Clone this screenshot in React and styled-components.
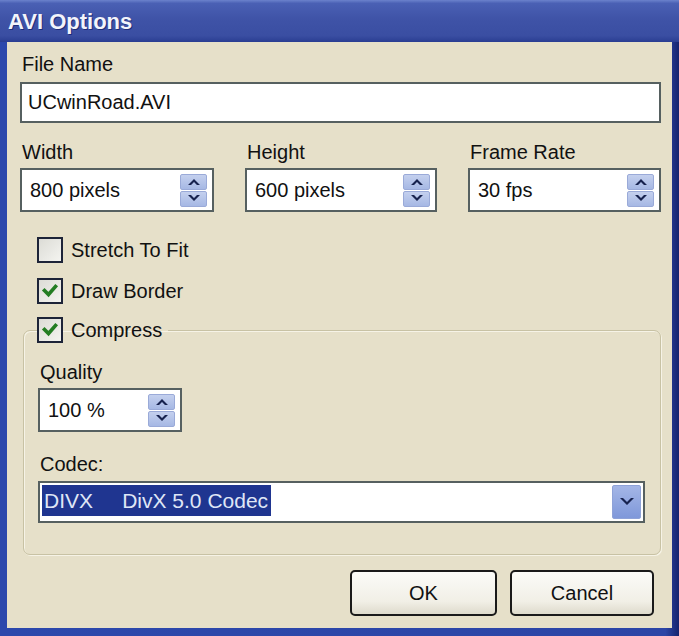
import React from "react";
import styled, { createGlobalStyle } from "styled-components";

const GlobalStyle = createGlobalStyle`
  html, body {
    margin: 0;
    padding: 0;
    background: #2a3f98;
  }
  body {
    font-family: "Liberation Sans", Arial, sans-serif;
  }
`;

function SpinArrows() {
  return (
    <SpinBtns>
      <SpinHalf>
        <svg width="14" height="9" viewBox="0 0 14 9">
          <path d="M1 8 L7 2 L13 8 L10 8 L7 5 L4 8 Z" fill="#17224e" />
        </svg>
      </SpinHalf>
      <SpinHalf>
        <svg width="14" height="9" viewBox="0 0 14 9">
          <path d="M1 1 L7 7 L13 1 L10 1 L7 4 L4 1 Z" fill="#17224e" />
        </svg>
      </SpinHalf>
    </SpinBtns>
  );
}

function Check({ checked, label }) {
  return (
    <CheckRow>
      <Box>
        {checked && (
          <svg width="18" height="18" viewBox="0 0 18 18">
            <path
              d="M3.5 8.5 L7.5 12.5 L14.5 4.5"
              fill="none"
              stroke="#237d23"
              strokeWidth="3.6"
              strokeLinecap="square"
            />
          </svg>
        )}
      </Box>
      <span>{label}</span>
    </CheckRow>
  );
}

export default function App() {
  return (
    <>
      <GlobalStyle />
      <Window>
        <TitleBar>AVI Options</TitleBar>
        <Client>
          <Label>File Name</Label>
          <TextBox>UCwinRoad.AVI</TextBox>

          <SpinGrid>
            <Field>
              <Label>Width</Label>
              <Spin>
                <span>800 pixels</span>
                <SpinArrows />
              </Spin>
            </Field>
            <Field>
              <Label>Height</Label>
              <Spin>
                <span>600 pixels</span>
                <SpinArrows />
              </Spin>
            </Field>
            <Field>
              <Label>Frame Rate</Label>
              <Spin>
                <span>30 fps</span>
                <SpinArrows />
              </Spin>
            </Field>
          </SpinGrid>

          <Checks>
            <Check label="Stretch To Fit" />
            <Check checked label="Draw Border" />
          </Checks>

          <Group>
            <Legend>
              <Check checked label="Compress" />
            </Legend>
            <Label $top={18}>Quality</Label>
            <Spin $width={144}>
              <span>100 %</span>
              <SpinArrows />
            </Spin>
            <Label $top={21}>Codec:</Label>
            <Select>
              <Selected>{"DIVX     DivX 5.0 Codec"}</Selected>
              <DropBtn>
                <svg width="16" height="12" viewBox="0 0 16 12">
                  <path d="M1 2 L8 9 L15 2 L12 2 L8 6 L4 2 Z" fill="#17224e" />
                </svg>
              </DropBtn>
            </Select>
          </Group>

          <Buttons>
            <Button $width={147}>OK</Button>
            <Button $width={144}>Cancel</Button>
          </Buttons>
        </Client>
      </Window>
    </>
  );
}

const Window = styled.div`
  width: 679px;
  height: 636px;
  box-sizing: border-box;
  display: flex;
  flex-direction: column;
  background: linear-gradient(90deg, #2c48ac 0%, #2c45a6 98%, #15236e 100%);
  padding: 0 7px 8px 7px;
  overflow: hidden;
`;

const TitleBar = styled.div`
  height: 42px;
  margin: 0 -7px;
  padding: 2px 8px 0 8px;
  box-sizing: border-box;
  display: flex;
  align-items: center;
  font-family: "Liberation Sans", Arial, sans-serif;
  font-weight: 700;
  font-size: 22px;
  color: #f2f4fb;
  background: linear-gradient(180deg, #6b82cc 0%, #4a60b4 8%, #3f53a7 45%, #3a4ea2 85%, #2a3d92 100%);
  text-shadow: 1px 1px 0 #1e2c78;
`;

const Client = styled.div`
  flex: 1;
  display: flex;
  flex-direction: column;
  background: #e6e0c9;
  padding: 11px 11px 0 13px;
  font-size: 20px;
  color: #111;
`;

const Label = styled.div`
  line-height: 23px;
  padding-left: 2px;
  margin-top: ${(p) => p.$top || 0}px;
  margin-bottom: 5px;
`;

const TextBox = styled.div`
  height: 41px;
  box-sizing: border-box;
  border: 2px solid #566060;
  background: #fff;
  display: flex;
  align-items: center;
  padding-left: 6px;
  margin-top: 1px;
`;

const SpinGrid = styled.div`
  display: grid;
  grid-template-columns: 194px 192px 193px;
  column-gap: 31px;
  margin-top: 18px;
`;

const Field = styled.div`
  display: flex;
  flex-direction: column;
`;

const Spin = styled.div`
  width: ${(p) => (p.$width ? `${p.$width}px` : "auto")};
  height: 44px;
  box-sizing: border-box;
  border: 2px solid #566060;
  background: #fff;
  display: flex;
  align-items: center;
  justify-content: space-between;
  padding: 0 5px 0 8px;
  margin-top: -1px;
`;

const SpinBtns = styled.div`
  display: flex;
  flex-direction: column;
  gap: 1px;
`;

const SpinHalf = styled.div`
  width: 27px;
  height: 16px;
  box-sizing: border-box;
  background: linear-gradient(180deg, #c4d0ee 0%, #a6b8e4 100%);
  border: 1px solid #9aaad8;
  border-radius: 2px;
  display: flex;
  align-items: center;
  justify-content: center;
`;

const Checks = styled.div`
  display: flex;
  flex-direction: column;
  gap: 15px;
  margin-top: 25px;
  padding-left: 17px;
`;

const CheckRow = styled.label`
  display: flex;
  align-items: center;
  gap: 8px;
  height: 26px;
  font-size: 20px;
  color: #111;
`;

const Box = styled.span`
  width: 26px;
  height: 26px;
  box-sizing: border-box;
  border: 2px solid #1d2438;
  background: linear-gradient(135deg, #dcdcd6 0%, #f4f4f0 100%);
  display: flex;
  align-items: center;
  justify-content: center;
`;

const Group = styled.fieldset`
  margin: 13px 0 0 3px;
  padding: 0 15px 31px 14px;
  border: 1px solid #c8c2a4;
  border-radius: 7px;
  box-shadow: inset 1px 1px 0 #f6f3e6, 1px 1px 0 #f6f3e6;
  min-width: 0;
`;

const Legend = styled.legend`
  padding: 0 6px 0 0;
  margin-left: -1px;
`;

const Select = styled.div`
  height: 42px;
  box-sizing: border-box;
  border: 2px solid #566060;
  background: #fff;
  display: flex;
  align-items: center;
  justify-content: space-between;
  padding: 2px;
`;

const Selected = styled.span`
  align-self: stretch;
  display: flex;
  align-items: center;
  white-space: pre;
  background: #1f3590;
  color: #dfe6f6;
  font-size: 21px;
  padding: 0 3px 0 2px;
  margin-bottom: 3px;
`;

const DropBtn = styled.div`
  width: 29px;
  height: 34px;
  box-sizing: border-box;
  background: linear-gradient(180deg, #a4b6e6 0%, #7f98da 100%);
  border: 1px solid #8ea2d8;
  border-radius: 2px;
  display: flex;
  align-items: center;
  justify-content: center;
`;

const Buttons = styled.div`
  display: flex;
  justify-content: flex-end;
  gap: 13px;
  margin-top: 15px;
  padding-right: 7px;
`;

const Button = styled.button`
  width: ${(p) => p.$width}px;
  height: 46px;
  border: 2px solid #1a1a1a;
  border-radius: 5px;
  background: linear-gradient(180deg, #fbfbf8 0%, #f1efe6 70%, #dedbcc 100%);
  font-family: "Liberation Sans", Arial, sans-serif;
  font-size: 20px;
  color: #111;
  padding: 0;
`;
